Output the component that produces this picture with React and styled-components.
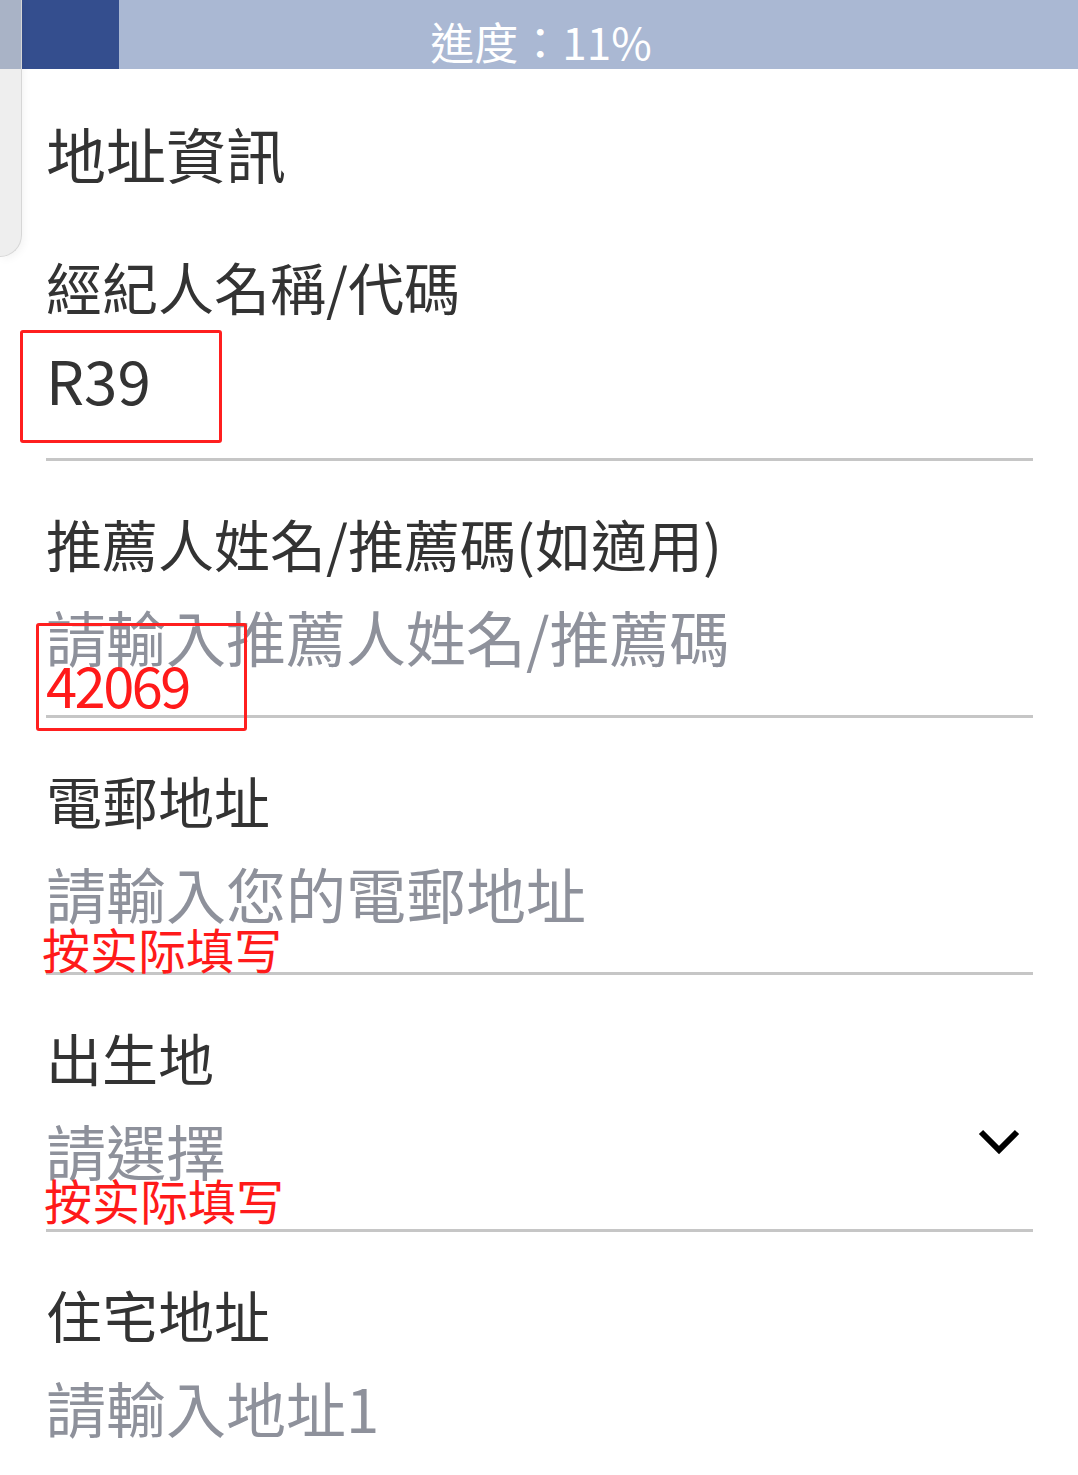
import React from 'react';
import styled, { createGlobalStyle } from 'styled-components';

const GlobalStyle = createGlobalStyle`
  html, body {
    margin: 0;
    padding: 0;
    background: #ffffff;
    overflow: hidden;
  }
  body {
    font-family: "Noto Sans CJK TC", "Noto Sans", sans-serif;
  }
`;

const fields = [
  {
    label: '經紀人名稱/代碼',
    value: 'R39',
    box: { top: -19, left: -26, width: 202, height: 113 },
  },
  {
    label: '推薦人姓名/推薦碼(如適用)',
    placeholder: '請輸入推薦人姓名/推薦碼',
    redValue: '42069',
    box: { top: 17, left: -10, width: 211, height: 108 },
  },
  {
    label: '電郵地址',
    placeholder: '請輸入您的電郵地址',
    note: { text: '按实际填写', top: 61, left: -4 },
  },
  {
    label: '出生地',
    placeholder: '請選擇',
    select: true,
    note: { text: '按实际填写', top: 55, left: -2 },
  },
  {
    label: '住宅地址',
    placeholder: '請輸入地址1',
    noLine: true,
  },
];

const App = () => {
  return (
    <Page>
      <GlobalStyle />
      <ProgressBar>
        <ProgressFill />
        <ProgressText>進度：11%</ProgressText>
      </ProgressBar>
      <SideTab />

      <Form>
        <SectionTitle>地址資訊</SectionTitle>

        {fields.map((f) => (
          <Field key={f.label}>
            <Label>{f.label}</Label>
            <InputRow>
              {f.value ? (
                <Value>{f.value}</Value>
              ) : (
                <Placeholder>{f.placeholder}</Placeholder>
              )}
              {f.select && (
                <Chevron width="42" height="28" viewBox="0 0 42 28">
                  <polyline
                    points="3,4 21,22 39,4"
                    fill="none"
                    stroke="#000"
                    strokeWidth="6"
                  />
                </Chevron>
              )}

              {/* red annotations drawn over the form */}
              {f.box && (
                <MarkBox
                  style={{
                    top: f.box.top,
                    left: f.box.left,
                    width: f.box.width,
                    height: f.box.height,
                  }}
                />
              )}
              {f.redValue && <RedValue>{f.redValue}</RedValue>}
              {f.note && (
                <RedNote style={{ top: f.note.top, left: f.note.left }}>
                  {f.note.text}
                </RedNote>
              )}
            </InputRow>
            {!f.noLine && <Divider />}
          </Field>
        ))}
      </Form>
    </Page>
  );
};

export default App;

const Page = styled.div`
  position: relative;
  width: 1078px;
  height: 1475px;
  overflow: hidden;
  background: #ffffff;
`;

const ProgressBar = styled.div`
  position: relative;
  height: 69px;
  box-sizing: border-box;
  padding-top: 19px;
  background: #aab8d3;
  text-align: center;
`;

const ProgressFill = styled.div`
  position: absolute;
  left: 0;
  top: 0;
  bottom: 0;
  width: 119px;
  background: #344e8e;
`;

const ProgressText = styled.div`
  position: relative;
  font-size: 44px;
  line-height: 1;
  color: #ffffff;
  padding-left: 4px;
`;

const SideTab = styled.div`
  position: absolute;
  left: 0;
  top: 0;
  width: 21px;
  height: 256px;
  background: linear-gradient(#a9b3c6 0 69px, #eeeeee 69px);
  border-right: 1px solid #d6d6d6;
  border-bottom: 1px solid #d6d6d6;
  border-bottom-right-radius: 24px;
  box-shadow: 2px 2px 8px rgba(0, 0, 0, 0.05);
`;

const Form = styled.div`
  padding: 0 45px 0 46px;
`;

const SectionTitle = styled.h1`
  margin: 54px 0 21px;
  font-size: 60px;
  line-height: 1;
  font-weight: 400;
  color: #333333;
`;

const Field = styled.div`
  padding-top: 54px;
`;

const Label = styled.div`
  font-size: 56px;
  line-height: 1;
  color: #333333;
  margin-bottom: 35px;
  white-space: nowrap;
`;

const InputRow = styled.div`
  position: relative;
  height: 109px;
  display: flex;
  justify-content: space-between;
  align-items: flex-start;
`;

const Placeholder = styled.div`
  font-size: 60px;
  line-height: 1;
  color: #8e919b;
  white-space: nowrap;
`;

const Value = styled(Placeholder)`
  color: #333333;
`;

const Chevron = styled.svg`
  margin-top: 8px;
  margin-right: 13px;
`;

const Divider = styled.div`
  height: 3px;
  background: #c6c6c6;
`;

const MarkBox = styled.div`
  position: absolute;
  box-sizing: border-box;
  border: 3px solid #ff1f1f;
  border-radius: 3px;
`;

const RedValue = styled.div`
  position: absolute;
  top: 50px;
  left: 0;
  font-size: 56px;
  line-height: 1;
  letter-spacing: -2.5px;
  color: #ff1a1a;
`;

const RedNote = styled.div`
  position: absolute;
  font-family: "Noto Sans CJK SC", "Noto Sans", sans-serif;
  font-size: 48px;
  line-height: 1;
  color: #ff1a1a;
  white-space: nowrap;
`;
